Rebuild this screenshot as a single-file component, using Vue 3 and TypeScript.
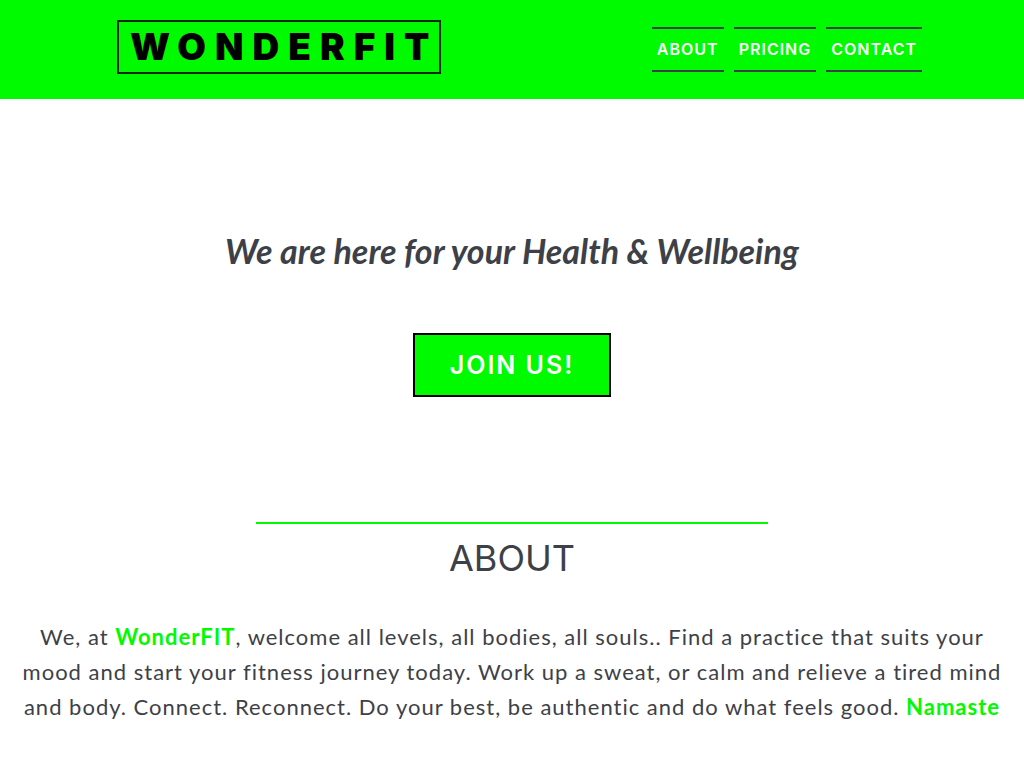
<script setup lang="ts">
interface NavLink {
  label: string
  href: string
}

const links: NavLink[] = [
  { label: 'ABOUT', href: '#about' },
  { label: 'PRICING', href: '#pricing' },
  { label: 'CONTACT', href: '#contact' },
]
</script>

<template>
  <header class="header">
    <a class="logo" href="#">WONDERFIT</a>
    <nav class="nav" aria-label="Main">
      <a v-for="link in links" :key="link.label" class="nav-link" :href="link.href">{{ link.label }}</a>
    </nav>
  </header>
  <main>
    <section class="hero">
      <h1 class="tagline">We are here for your Health &amp; Wellbeing</h1>
      <button class="join" type="button">JOIN US!</button>
    </section>
    <section id="about" class="about">
      <hr class="rule" />
      <h2 class="title">ABOUT</h2>
      <p class="copy">
        We, at <strong>WonderFIT</strong>, welcome all levels, all bodies, all souls.. Find a practice that suits your
        mood and start your fitness journey today. Work up a sweat, or calm and relieve a tired mind
        and body. Connect. Reconnect. Do your best, be authentic and do what feels good. <strong>Namaste</strong>
      </p>
    </section>
  </main>
</template>

<style>
body {
  margin: 0;
  background: #fff;
}
</style>

<style scoped>
.header,
main {
  font-family: Inter, "Liberation Sans", sans-serif;
  color: #3d4147;
}

.header {
  display: flex;
  justify-content: space-between;
  align-items: flex-start;
  padding: 20px 102px 25px 117px;
  background: #00fa00;
}

.logo {
  box-sizing: border-box;
  height: 54px;
  padding: 0 1px 0 11px;
  border: 2px solid #002800;
  color: #000;
  font-size: 37px;
  font-weight: 900;
  line-height: 50px;
  letter-spacing: 9px;
  text-decoration: none;
}

.nav {
  display: flex;
  gap: 10px;
  padding-top: 7px;
}

.nav-link {
  padding: 0 5px;
  border-top: 2px solid #3d4147;
  border-bottom: 2px solid #3d4147;
  color: #fff;
  font-size: 16px;
  font-weight: 600;
  line-height: 41px;
  text-decoration: none;
  letter-spacing: 1px;
}

.hero {
  display: flex;
  flex-direction: column;
  align-items: center;
  padding: 120px 16px 125px;
}

.tagline {
  margin: 0 0 50px;
  font-family: "Segoe Script", "Bradley Hand", Lato, cursive;
  font-size: 34px;
  font-style: italic;
  font-weight: 700;
  line-height: 64px;
  text-align: center;
}

.join {
  padding: 0 35px;
  border: 2px solid #000;
  background: #00fa00;
  color: #fff;
  font-family: inherit;
  font-size: 25px;
  font-weight: 600;
  line-height: 60px;
  letter-spacing: 2px;
}

.about {
  text-align: center;
}

.rule {
  width: 50%;
  height: 2px;
  margin: 0 auto;
  border: 0;
  background: #00fa00;
}

.title {
  margin: 8px 0 35px;
  font-size: 36px;
  font-weight: 400;
  line-height: 52px;
}

.copy {
  margin: 0;
  padding: 0 8px 44px;
  font-family: Lato, "Liberation Sans", sans-serif;
  font-size: 22px;
  line-height: 35px;
  letter-spacing: 1px;
}

.copy strong {
  color: #00fa00;
}
</style>
